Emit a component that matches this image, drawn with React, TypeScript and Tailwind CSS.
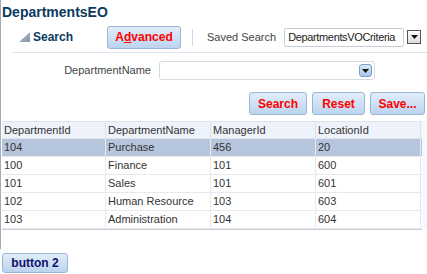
import React from 'react';

const rows = [
  { id: '104', name: 'Purchase', mgr: '456', loc: '20', selected: true },
  { id: '100', name: 'Finance', mgr: '101', loc: '600' },
  { id: '101', name: 'Sales', mgr: '101', loc: '601' },
  { id: '102', name: 'Human Resource', mgr: '103', loc: '603' },
  { id: '103', name: 'Administration', mgr: '104', loc: '604' },
];

const btn =
  'h-[23px] rounded-[3px] border border-[#9ab6d6] bg-gradient-to-b from-[#e2edf9] to-[#bcd3ee] text-[12px] font-bold text-[#ff0000] leading-none';

function DownArrow() {
  return (
    <svg width="7" height="4" viewBox="0 0 7 4">
      <path d="M0 0h7L3.5 4z" fill="#111" />
    </svg>
  );
}

export default function App() {
  return (
    <div className="relative h-[274px] w-[427px] overflow-hidden bg-white font-['Liberation_Sans',Arial,sans-serif] text-[#333]">
      <div className="h-[249px] border-l border-[#a3acb6]">
        {/* title */}
        <div className="h-[22px] pl-[1px] pt-[3px] text-[14px] font-bold leading-[18px] text-[#0b3a5e]">
          DepartmentsEO
        </div>

        {/* search header */}
        <div className="flex h-[30px] items-center">
          <svg className="ml-[18px]" width="11" height="10" viewBox="0 0 11 10">
            <defs>
              <linearGradient id="tri" x1="0" y1="0" x2="1" y2="1">
                <stop offset="0" stopColor="#b9c6d4" />
                <stop offset="1" stopColor="#7f93a9" />
              </linearGradient>
            </defs>
            <path d="M11 0v10H0z" fill="url(#tri)" />
          </svg>
          <span className="ml-[3px] text-[12px] font-bold text-[#0b3a5e]">Search</span>
          <button className={`${btn} ml-[34px] w-[74px]`}>
            A<span className="underline">d</span>vanced
          </button>
          <div className="ml-[11px] h-[17px] w-px bg-[#d3d9e0]" />
          <span className="ml-[14px] text-[11px] text-[#444]">Saved Search</span>
          <div className="ml-[8px] flex h-[19px] w-[137px] items-center">
            <div className="flex h-full flex-1 items-center overflow-hidden whitespace-nowrap rounded-[2px] border border-[#c5ced8] pl-[3px] text-[11px] tracking-[-0.35px] text-[#222]">
              DepartmentsVOCriteria
            </div>
            <div className="ml-[3px] flex h-[14px] w-[14px] items-center justify-center border border-[#555] bg-gradient-to-b from-white to-[#dcdcdc]">
              <DownArrow />
            </div>
          </div>
        </div>

        <div className="ml-[11px] h-px bg-[#dce3ea]" />

        {/* criteria */}
        <div className="mt-[8px] flex h-[19px] items-center">
          <span className="w-[150px] text-right text-[11px] text-[#444]">DepartmentName</span>
          <div className="ml-[8px] flex h-[19px] w-[216px] items-center justify-end rounded-[3px] border border-[#d3dbe4] pr-[2px]">
            <div className="flex h-[13px] w-[13px] items-center justify-center rounded-[3px] border border-[#7d9fc6] bg-gradient-to-b from-[#dbe8f7] to-[#a9c5e8]">
              <DownArrow />
            </div>
          </div>
        </div>

        <div className="mt-[12px] flex justify-end gap-[5px] pr-[2px]">
          <button className={`${btn} w-[58px]`}>Search</button>
          <button className={`${btn} w-[53px]`}>Reset</button>
          <button className={`${btn} w-[55px]`}>Save...</button>
        </div>

        {/* table */}
        <div className="mt-[6px] flex">
          <div className="ml-[1px] w-[420px] border-b border-[#c9cfd6] border-t border-t-[#dfe4ea]">
            <div className="grid h-[17px] grid-cols-[104px_105px_105px_105px] border-b border-[#e2e6eb] bg-[#eef2fa] text-[11px] leading-[17px]">
              <div className="border-r border-[#dde2e8] pl-[2px]">DepartmentId</div>
              <div className="border-r border-[#dde2e8] pl-[2px]">DepartmentName</div>
              <div className="border-r border-[#dde2e8] pl-[2px]">ManagerId</div>
              <div className="border-r border-[#dde2e8] pl-[2px]">LocationId</div>
            </div>
            {rows.map((r) => (
              <div
                key={r.id}
                className={`grid h-[18px] grid-cols-[104px_105px_105px_105px] border-b border-[#e6e9ed] text-[11px] leading-[17px] ${
                  r.selected ? 'bg-[#b5c6dc]' : 'bg-white'
                }`}
              >
                <div className="border-r border-[#e6e9ed] pl-[2px]">{r.id}</div>
                <div className="border-r border-[#e6e9ed] pl-[2px]">{r.name}</div>
                <div className="border-r border-[#e6e9ed] pl-[2px]">{r.mgr}</div>
                <div className="border-r border-[#e6e9ed] pl-[2px]">{r.loc}</div>
              </div>
            ))}
          </div>
          <div className="flex-1 bg-[#f6f8fc]" />
        </div>
      </div>

      <button className="ml-[2px] mt-[4px] h-[20px] w-[66px] rounded-[3px] border border-[#9ab6d6] bg-gradient-to-b from-[#e2edf9] to-[#bcd3ee] text-[12px] font-bold leading-none text-[#10106e]">
        button 2
      </button>
    </div>
  );
}
